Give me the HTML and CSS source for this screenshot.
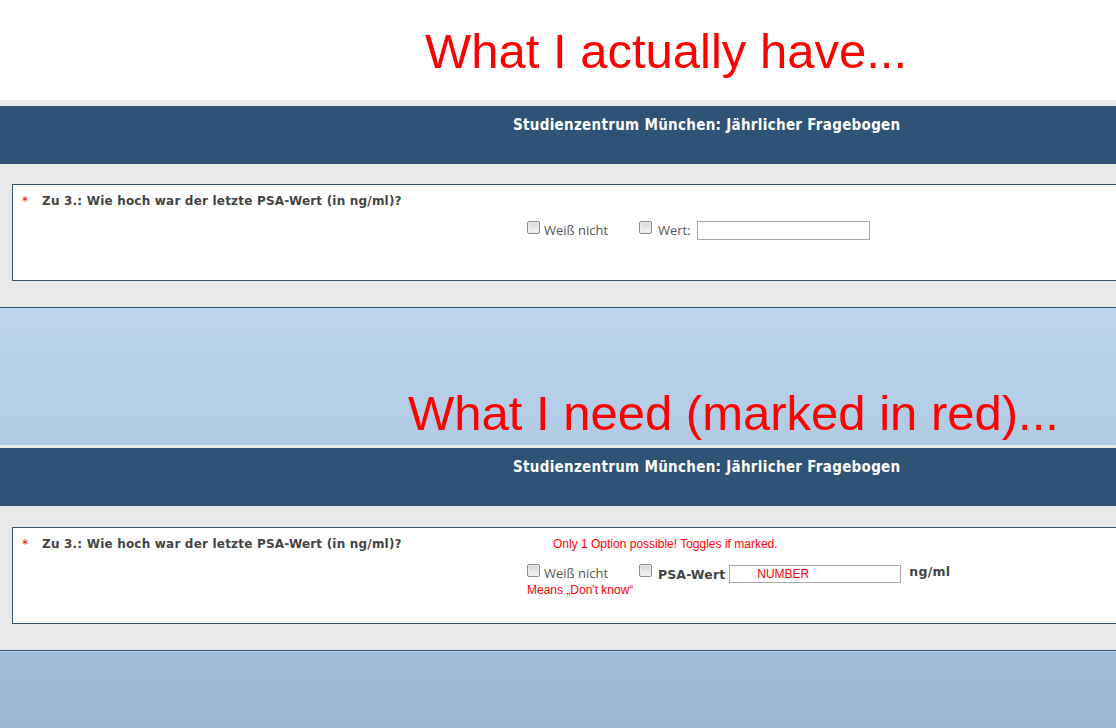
FILE: index.html
```html
<!DOCTYPE html>
<html>
<head>
  <title>Studienzentrum München: Jährlicher Fragebogen</title>
  <link rel="stylesheet" href="styles.css">
</head>
<body>
  <div class="caption caption-top">What I actually have...</div>

  <div class="survey">
    <div class="survey-head">Studienzentrum München: Jährlicher Fragebogen</div>
    <div class="question">
      <div class="q-title"><span class="req">*</span>Zu 3.: Wie hoch war der letzte PSA-Wert (in ng/ml)?</div>
      <div class="q-note"></div>
      <div class="answers">
        <div class="opt-group">
          <label class="opt opt-first"><input type="checkbox"><span>Weiß nicht</span></label>
        </div>
        <label class="opt"><input type="checkbox"><span>Wert:</span></label>
        <input type="text" class="value">
      </div>
    </div>
  </div>

  <div class="band band-light">
    <div class="caption caption-band">What I need (marked in red)...</div>
  </div>

  <div class="survey survey-second">
    <div class="survey-head">Studienzentrum München: Jährlicher Fragebogen</div>
    <div class="question">
      <div class="q-title"><span class="req">*</span>Zu 3.: Wie hoch war der letzte PSA-Wert (in ng/ml)?</div>
      <div class="q-note">Only 1 Option possible! Toggles if marked.</div>
      <div class="answers">
        <div class="opt-group">
          <label class="opt opt-first"><input type="checkbox"><span>Weiß nicht</span></label>
          <div class="hint">Means „Don't know“</div>
        </div>
        <label class="opt"><input type="checkbox"><span class="strong">PSA-Wert</span></label>
        <input type="text" class="value value-wide" value="NUMBER">
        <span class="unit">ng/ml</span>
      </div>
    </div>
  </div>

  <div class="band band-dark"></div>
</body>
</html>
```

FILE: styles.css
```css
body {
  margin: 0;
  background: #fff;
  font-family: "DejaVu Sans", Verdana, sans-serif;
  overflow: hidden;
}
.caption {
  font-family: "Liberation Sans", Arial, sans-serif;
  font-size: 49px;
  color: #f00;
  white-space: nowrap;
}
.caption-top {
  height: 100px;
  box-sizing: border-box;
  padding: 23px 0 0 425px;
}
.caption-band {
  padding-left: 408px;
}
.survey {
  background: #e8e8e8;
  padding-top: 6px;
  padding-bottom: 26px;
}
.survey-second {
  padding-top: 3px;
}
.survey-head {
  height: 58px;
  box-sizing: border-box;
  background: #2f5375;
  color: #fff;
  font-family: "DejaVu Sans Condensed", Tahoma, sans-serif;
  font-weight: bold;
  font-size: 15px;
  letter-spacing: 0.3px;
  padding: 10px 0 0 513px;
}
.question {
  display: grid;
  grid-template-columns: 505px auto;
  align-content: start;
  height: 97px;
  box-sizing: border-box;
  margin: 20px -10px 0 12px;
  padding: 8px 0 0 9px;
  background: #fff;
  border: 1px solid #2f5375;
  border-right: none;
}
.survey-second .question {
  margin-top: 21px;
}
.q-title {
  font-size: 12px;
  letter-spacing: 0.2px;
  font-weight: bold;
  color: #444;
  line-height: 16px;
}
.req {
  display: inline-block;
  width: 20px;
  color: #e00;
  font-weight: normal;
  letter-spacing: 0;
}
.q-note {
  font-family: "Liberation Sans", Arial, sans-serif;
  font-size: 12px;
  color: #f00;
  line-height: 16px;
  padding-left: 26px;
}
.answers {
  grid-column: 2;
  display: flex;
  align-items: flex-start;
  margin-top: 12px;
}
.opt-group {
  width: 112px;
}
.opt {
  display: flex;
  align-items: flex-start;
  font-family: "Open Sans", sans-serif;
  font-size: 13px;
  color: #555;
  line-height: 19px;
}
.opt input {
  appearance: none;
  width: 13px;
  height: 13px;
  margin: 0 6px 0 0;
  border: 1px solid #8a8a8a;
  border-radius: 2px;
  background: linear-gradient(#d6d6d6, #f4f4f4);
  box-shadow: inset 0 0 0 1px #eeeeee;
}
.opt-first input {
  margin-right: 4px;
}
.strong {
  font-family: "DejaVu Sans", Verdana, sans-serif;
  font-weight: bold;
  color: #444;
  font-size: 12.5px;
  letter-spacing: 0.1px;
  line-height: 22px;
}
.hint {
  font-family: "Liberation Sans", Arial, sans-serif;
  font-size: 12px;
  color: #f00;
  line-height: 14px;
}
.value {
  width: 173px;
  height: 19px;
  box-sizing: border-box;
  margin: 0 0 0 6px;
  border: 1px solid #a9a9a9;
  padding: 0 0 0 27px;
  font-family: "Liberation Sans", Arial, sans-serif;
  font-size: 12px;
  color: #f00;
}
.value-wide {
  margin-left: 4px;
  margin-top: 1px;
  height: 18px;
  width: 172px;
}
.unit {
  font-weight: bold;
  color: #444;
  font-size: 12.5px;
  letter-spacing: 0.3px;
  margin-left: 8px;
  line-height: 16px;
}
.band {
  border-top: 1px solid #2f5375;
}
.band-light {
  height: 138px;
  box-sizing: border-box;
  padding-top: 77px;
  background: linear-gradient(#bdd5ee, #b1cbe5);
}
.band-dark {
  height: 100px;
  background: linear-gradient(#a1bcd8, #9bb6d2);
  box-shadow: inset 0 1px #b7cde7;
}
```
